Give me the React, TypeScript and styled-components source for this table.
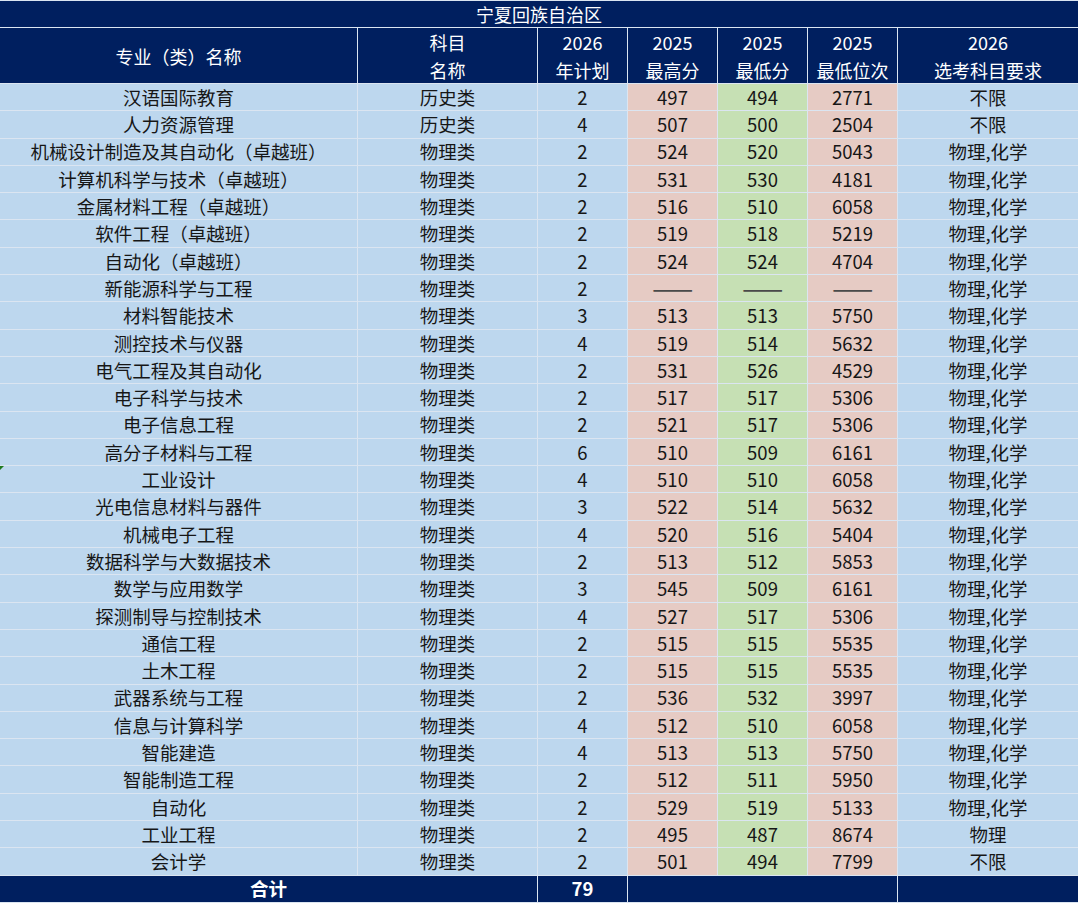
import React from "react";
import styled, { createGlobalStyle } from "styled-components";

const GlobalStyle = createGlobalStyle`
  html, body {
    margin: 0;
    padding: 0;
    background: #ffffff;
  }
  body {
    font-family: "Noto Sans CJK SC", "Noto Sans", sans-serif;
  }
`;

type Row = [string, string, number, string, string, string, string];

const rows: Row[] = [
  ["汉语国际教育", "历史类", 2, "497", "494", "2771", "不限"],
  ["人力资源管理", "历史类", 4, "507", "500", "2504", "不限"],
  ["机械设计制造及其自动化（卓越班）", "物理类", 2, "524", "520", "5043", "物理,化学"],
  ["计算机科学与技术（卓越班）", "物理类", 2, "531", "530", "4181", "物理,化学"],
  ["金属材料工程（卓越班）", "物理类", 2, "516", "510", "6058", "物理,化学"],
  ["软件工程（卓越班）", "物理类", 2, "519", "518", "5219", "物理,化学"],
  ["自动化（卓越班）", "物理类", 2, "524", "524", "4704", "物理,化学"],
  ["新能源科学与工程", "物理类", 2, "——", "——", "——", "物理,化学"],
  ["材料智能技术", "物理类", 3, "513", "513", "5750", "物理,化学"],
  ["测控技术与仪器", "物理类", 4, "519", "514", "5632", "物理,化学"],
  ["电气工程及其自动化", "物理类", 2, "531", "526", "4529", "物理,化学"],
  ["电子科学与技术", "物理类", 2, "517", "517", "5306", "物理,化学"],
  ["电子信息工程", "物理类", 2, "521", "517", "5306", "物理,化学"],
  ["高分子材料与工程", "物理类", 6, "510", "509", "6161", "物理,化学"],
  ["工业设计", "物理类", 4, "510", "510", "6058", "物理,化学"],
  ["光电信息材料与器件", "物理类", 3, "522", "514", "5632", "物理,化学"],
  ["机械电子工程", "物理类", 4, "520", "516", "5404", "物理,化学"],
  ["数据科学与大数据技术", "物理类", 2, "513", "512", "5853", "物理,化学"],
  ["数学与应用数学", "物理类", 3, "545", "509", "6161", "物理,化学"],
  ["探测制导与控制技术", "物理类", 4, "527", "517", "5306", "物理,化学"],
  ["通信工程", "物理类", 2, "515", "515", "5535", "物理,化学"],
  ["土木工程", "物理类", 2, "515", "515", "5535", "物理,化学"],
  ["武器系统与工程", "物理类", 2, "536", "532", "3997", "物理,化学"],
  ["信息与计算科学", "物理类", 4, "512", "510", "6058", "物理,化学"],
  ["智能建造", "物理类", 4, "513", "513", "5750", "物理,化学"],
  ["智能制造工程", "物理类", 2, "512", "511", "5950", "物理,化学"],
  ["自动化", "物理类", 2, "529", "519", "5133", "物理,化学"],
  ["工业工程", "物理类", 2, "495", "487", "8674", "物理"],
  ["会计学", "物理类", 2, "501", "494", "7799", "不限"],
];

const NAVY = "#001f5f";

const Sheet = styled.div`
  width: 1078px;
  display: grid;
  grid-template-columns: 357px 179px 89px 89px 89px 89px 180px;
  grid-template-rows: 26px 55px repeat(29, 26.31px) 26px;
  gap: 1px;
  padding: 1px 0;
  background: #dbe5f1;
  color: #161616;
  font-size: 18.5px;
`;

const TitleCell = styled.div`
  grid-column: 1 / -1;
  background: ${NAVY};
  color: #ffffff;
  font-size: 18px;
  display: flex;
  align-items: center;
  justify-content: center;
  line-height: 1;
`;

const HeadCell = styled.div`
  background: ${NAVY};
  color: #ffffff;
  display: flex;
  flex-direction: column;
  align-items: center;
  justify-content: center;
  line-height: 28px;
  font-size: 18px;
`;

type Tone = "blue" | "pink" | "green";

const toneColor: Record<Tone, string> = {
  blue: "#bdd7ee",
  pink: "#e6cbc4",
  green: "#c6e0b4",
};

const Cell = styled.div<{ $tone: Tone }>`
  position: relative;
  background: ${(p) => toneColor[p.$tone]};
  display: flex;
  align-items: center;
  justify-content: center;
  line-height: 1;
  white-space: nowrap;
`;

const Dash = styled.span`
  display: inline-block;
  color: #4a4a4a;
  font-weight: 700;
  letter-spacing: 0;
  transform: scaleX(1.3);
`;

const Marker = styled.span`
  position: absolute;
  left: 0;
  top: 0;
  width: 0;
  height: 0;
  border-top: 4px solid #1f7a1f;
  border-right: 4px solid transparent;
`;

const FootCell = styled.div<{ $span?: string }>`
  grid-column: ${(p) => p.$span ?? "auto"};
  background: ${NAVY};
  color: #ffffff;
  font-weight: 700;
  display: flex;
  align-items: center;
  justify-content: center;
  line-height: 1;
`;

const Value = ({ v }: { v: string }) =>
  v === "——" ? <Dash>——</Dash> : <>{v}</>;

export default function App() {
  return (
    <>
      <GlobalStyle />
      <Sheet>
        <TitleCell>宁夏回族自治区</TitleCell>
        <HeadCell>专业（类）名称</HeadCell>
        <HeadCell>
          <span>科目</span>
          <span>名称</span>
        </HeadCell>
        <HeadCell>
          <span>2026</span>
          <span>年计划</span>
        </HeadCell>
        <HeadCell>
          <span>2025</span>
          <span>最高分</span>
        </HeadCell>
        <HeadCell>
          <span>2025</span>
          <span>最低分</span>
        </HeadCell>
        <HeadCell>
          <span>2025</span>
          <span>最低位次</span>
        </HeadCell>
        <HeadCell>
          <span>2026</span>
          <span>选考科目要求</span>
        </HeadCell>
        {rows.map((r) => (
          <React.Fragment key={r[0]}>
            <Cell $tone="blue">
              {r[0] === "工业设计" && <Marker />}
              {r[0]}
            </Cell>
            <Cell $tone="blue">{r[1]}</Cell>
            <Cell $tone="blue">{r[2]}</Cell>
            <Cell $tone="pink">
              <Value v={r[3]} />
            </Cell>
            <Cell $tone="green">
              <Value v={r[4]} />
            </Cell>
            <Cell $tone="pink">
              <Value v={r[5]} />
            </Cell>
            <Cell $tone="blue">{r[6]}</Cell>
          </React.Fragment>
        ))}
        <FootCell $span="1 / 3">合计</FootCell>
        <FootCell>79</FootCell>
        <FootCell $span="4 / 7" />
        <FootCell />
      </Sheet>
    </>
  );
}
